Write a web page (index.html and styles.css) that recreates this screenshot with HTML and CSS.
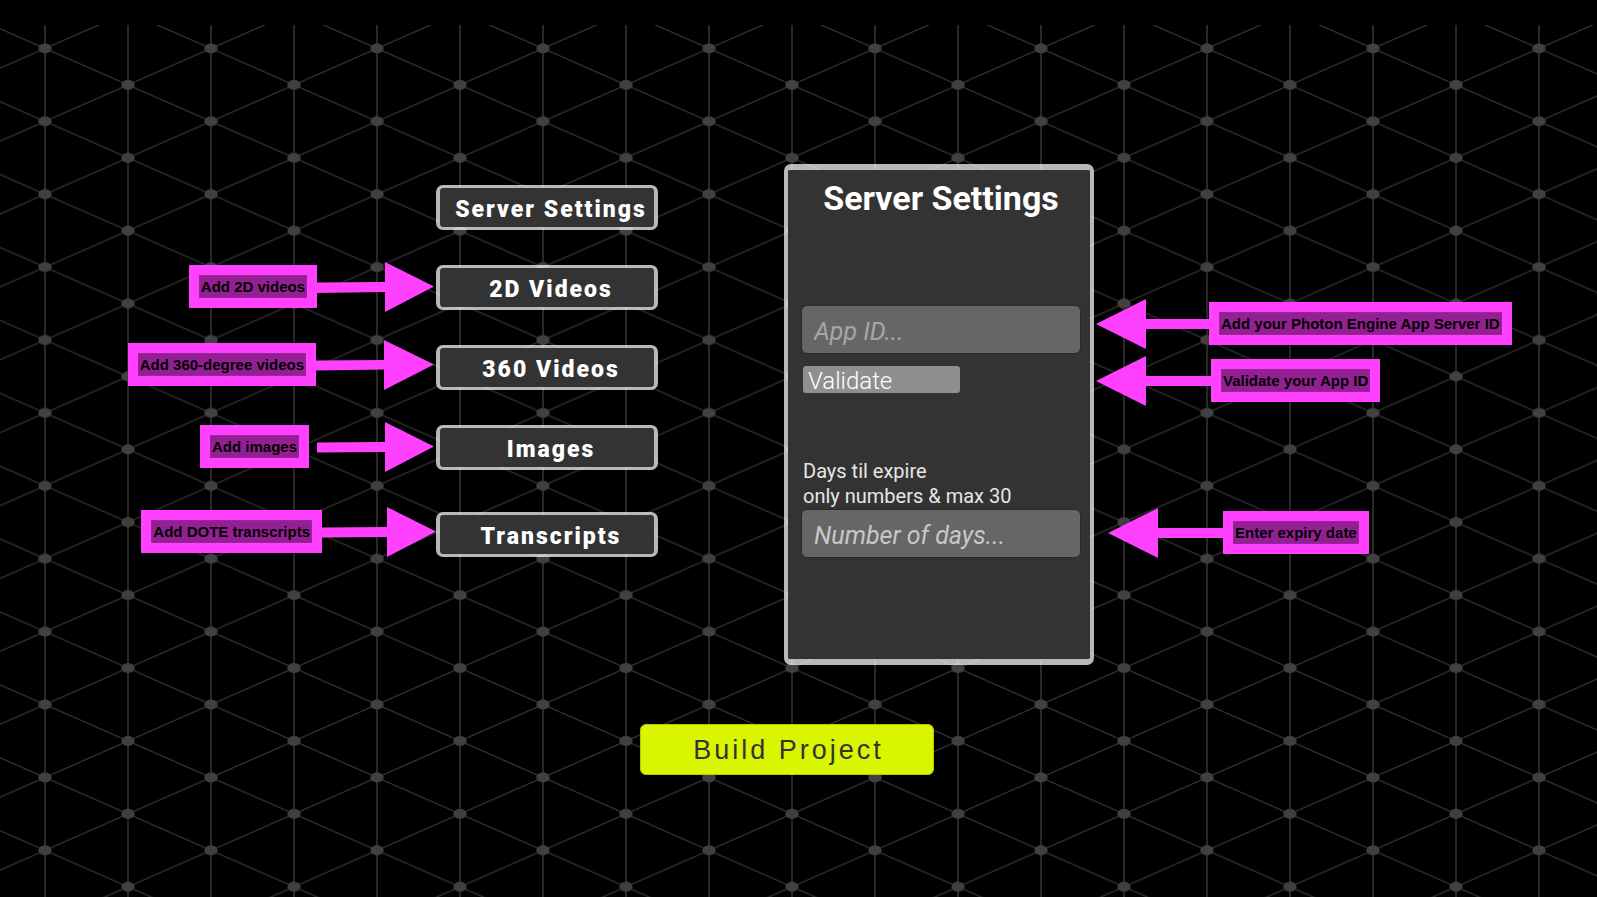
FILE: index.html
```html
<!DOCTYPE html>
<html lang="en">
<head>
<meta charset="utf-8">
<meta name="viewport" content="width=device-width, initial-scale=1">
<title>Server Settings</title>
<link rel="stylesheet" href="styles.css">
</head>
<body>
<svg class="lattice" aria-hidden="true">
  <defs>
    <pattern id="mesh" x="-38" y="-13" width="166" height="72.9" patternUnits="userSpaceOnUse">
      <path class="mesh-line" d="M0 0 166 72.9M0 72.9 166 0"/>
      <path class="mesh-post" d="M83 0V72.9M0 0V72.9M166 0V72.9"/>
      <g class="mesh-node">
        <ellipse cx="83" cy="36.45" rx="6.7" ry="5"/>
        <ellipse cx="0" cy="0" rx="6.7" ry="5"/>
        <ellipse cx="166" cy="0" rx="6.7" ry="5"/>
        <ellipse cx="0" cy="72.9" rx="6.7" ry="5"/>
        <ellipse cx="166" cy="72.9" rx="6.7" ry="5"/>
      </g>
    </pattern>
  </defs>
  <rect width="100%" height="100%" fill="url(#mesh)"/>
</svg>

<main class="stage">
  <div class="notes notes-left">
    <div class="note">
      <span class="tag">Add 2D videos</span>
      <svg class="arrow" width="117" height="50" viewBox="0 0 117 50"><path d="M0 20.5 68 20V0L117 24.5 68 50V30L0 31Z"/></svg>
    </div>
    <div class="note note-360">
      <span class="tag">Add 360-degree videos</span>
      <svg class="arrow" width="118" height="50" viewBox="0 0 118 50"><path d="M0 20.5 68 20V0L118 24.5 68 50V29.5L0 30.5Z"/></svg>
    </div>
    <div class="note note-images">
      <span class="tag">Add images</span>
      <svg class="arrow" width="117" height="50" viewBox="0 0 117 50"><path d="M0 20.5 68 20V0L117 24.5 68 50V30L0 30.5Z"/></svg>
    </div>
    <div class="note note-transcripts">
      <span class="tag">Add DOTE transcripts</span>
      <svg class="arrow" width="114" height="50" viewBox="0 0 114 50"><path d="M0 20.5 65 20V0L114 24.5 65 50V30L0 30.5Z"/></svg>
    </div>
  </div>

  <nav class="menu">
    <button class="menu-item" type="button">Server Settings</button>
    <button class="menu-item" type="button">2D Videos</button>
    <button class="menu-item" type="button">360 Videos</button>
    <button class="menu-item" type="button">Images</button>
    <button class="menu-item menu-last" type="button">Transcripts</button>
  </nav>

  <form class="panel">
    <h1 class="panel-title">Server Settings</h1>
    <input class="field field-app" type="text" placeholder="App ID..." aria-label="App ID">
    <button class="validate" type="button">Validate</button>
    <label class="hint" for="days">Days til expire<br>only numbers &amp; max 30</label>
    <input class="field" id="days" type="text" placeholder="Number of days...">
  </form>

  <div class="notes notes-right">
    <div class="note">
      <svg class="arrow" width="113" height="50" viewBox="0 0 113 50"><path d="M0 25 50 0V20H113V30H50V50Z"/></svg>
      <span class="tag">Add your Photon Engine App Server ID</span>
    </div>
    <div class="note note-validate">
      <svg class="arrow" width="115" height="50" viewBox="0 0 115 50"><path d="M0 25 50 0V20H115V30H50V50Z"/></svg>
      <span class="tag">Validate your App ID</span>
    </div>
    <div class="note note-expiry">
      <svg class="arrow" width="115" height="50" viewBox="0 0 115 50"><path d="M0 25 50 0V20H115V30H50V50Z"/></svg>
      <span class="tag">Enter expiry date</span>
    </div>
  </div>
</main>

<footer class="actions">
  <button class="build" type="button">Build Project</button>
</footer>
</body>
</html>
```

FILE: styles.css
```css
* {
  box-sizing: border-box;
}

body {
  margin: 0;
  min-height: 100vh;
  background: #000;
  color: #fff;
  font-family: Roboto, "Liberation Sans", sans-serif;
}

button,
input {
  font-family: inherit;
}

/* Background mesh */
.lattice {
  position: absolute;
  top: 25px;
  left: 0;
  z-index: -1;
  width: 100%;
  height: calc(100% - 25px);
}

.mesh-line {
  fill: none;
  stroke: #303030;
  stroke-width: 1.3;
}

.mesh-post {
  fill: none;
  stroke: #292929;
  stroke-width: 2;
}

.mesh-node {
  fill: #404040;
}

/* Columns */
.stage {
  display: grid;
  grid-template-columns: minmax(0, 436fr) 348px 310px minmax(0, 503fr);
  align-items: start;
  padding-top: 164px;
}

/* Callouts */
.notes {
  display: flex;
  flex-direction: column;
}

.notes-left {
  align-items: flex-end;
  padding: 98px 2px 0 0;
}

.notes-right {
  align-items: flex-start;
  padding: 135px 0 0 2px;
}

.note {
  display: flex;
  align-items: center;
}

.note-360 {
  margin-top: 28px;
}

.note-images {
  gap: 8px;
  margin-top: 32px;
}

.note-transcripts {
  margin: 35px -2px 0 0;
}

.note-validate {
  margin-top: 7px;
}

.note-expiry {
  margin: 102px 0 0 12px;
}

.arrow {
  display: block;
  flex: none;
  fill: #ff40ff;
}

.tag {
  margin-bottom: 1px;
  border: 10px solid #ff40ff;
  padding: 0 2px;
  background: #932092;
  box-shadow: inset 0 0 0 1px #9c259b;
  color: #000;
  font: bold 15px/23px "Liberation Sans", Arial, sans-serif;
  white-space: nowrap;
}

/* Menu */
.menu {
  display: flex;
  flex-direction: column;
  gap: 35px;
  padding-top: 21px;
  padding-right: 126px;
}

.menu-item {
  height: 45px;
  padding: 4px 0 0 8px;
  border: 4px solid rgba(255, 255, 255, 0.72);
  border-width: 3px 4px;
  border-radius: 7px;
  background: #333 padding-box;
  color: #fff;
  font-size: 23px;
  font-weight: 900;
  letter-spacing: 2px;
  white-space: nowrap;
}

.menu-last {
  margin-top: 7px;
}

/* Settings panel */
.panel {
  display: flex;
  flex-direction: column;
  align-items: flex-start;
  min-height: 501px;
  padding: 0 9px 0 13px;
  border: 4px solid rgba(255, 255, 255, 0.72);
  border-width: 6px 4px;
  border-radius: 7px;
  background: #333 padding-box;
}

.panel-title {
  align-self: center;
  margin: 6px 0 0;
  font-size: 34px;
  font-weight: 700;
  line-height: 44px;
}

.field {
  width: 100%;
  height: 49px;
  padding: 3px 12px 0;
  border: 1px solid #2a2a2a;
  border-radius: 6px;
  background: #666;
  color: #fff;
  font-size: 25px;
  font-weight: 400;
}

.field::placeholder {
  color: #c8c8c8;
  font-style: italic;
  opacity: 1;
}

.field-app {
  margin-top: 85px;
}

.field-app::placeholder {
  color: #a6a6a6;
}

.validate {
  width: 157px;
  height: 27px;
  margin: 12px 0 0 2px;
  padding: 3px 5px 0;
  border: 0;
  border-radius: 3px;
  background: #8f8f8f;
  color: #fff;
  font-size: 24px;
  font-weight: 300;
  line-height: 24px;
  text-align: left;
}

.hint {
  margin: 66px 0 0 2px;
  color: #e6e6e6;
  font-size: 20px;
  font-weight: 400;
  line-height: 25px;
}

/* Footer */
.actions {
  display: flex;
  justify-content: center;
  padding: 59px 23px 40px 0;
}

.build {
  width: 294px;
  height: 51px;
  padding: 2px 0 0 3px;
  border: 1px solid #b4cc00;
  border-radius: 6px;
  background: #d9f500;
  color: #333;
  font-family: "Liberation Sans", Arial, sans-serif;
  font-size: 27px;
  letter-spacing: 3px;
}
```
